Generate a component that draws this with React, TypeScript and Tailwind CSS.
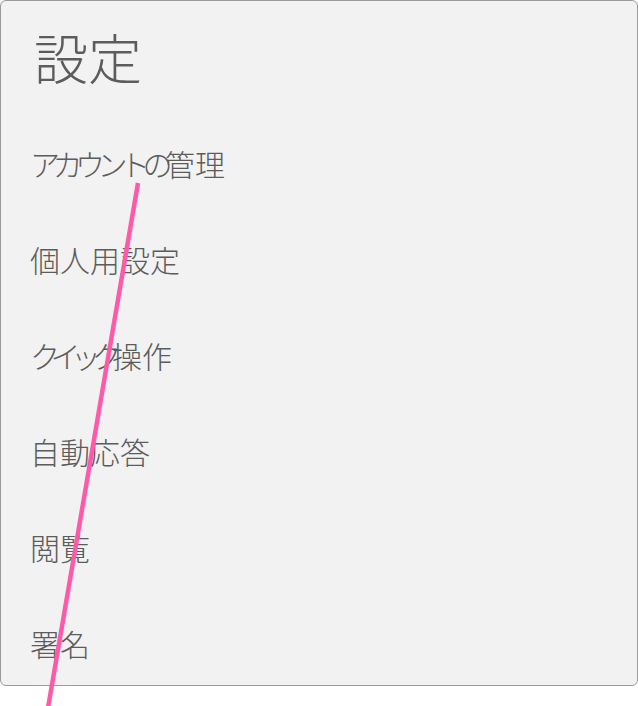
import React from 'react';

// kana runs are set tighter, kanji at full width
const items: { text: string; tight?: string }[][] = [
    [{ text: 'アカウントの', tight: 'tracking-[-7.5px]' }, { text: '管理' }],
    [{ text: '個人用設定' }],
    [{ text: 'クイック', tight: 'tracking-[-9.5px]' }, { text: '操作' }],
    [{ text: '自動応答' }],
    [{ text: '閲覧' }],
    [{ text: '署名' }],
];

export default function App() {
    return (
        <div className="relative w-[638px] h-[706px] bg-white font-['Noto_Sans_CJK_JP',sans-serif]">
            <div className="h-[686px] w-[638px] bg-[#f2f2f2] border border-[#9a9a9a] rounded-[6px] text-[#5c5c5c]">
                <h1 className="pl-[33px] pt-[20px] h-[80px] text-[54px] font-light leading-[72px]">設定</h1>
                <ul className="pt-[62px]">
                    {items.map((parts, i) => (
                        <li key={i} className="pl-[29px] h-[96px] text-[30px] font-light leading-[40px]">
                            {parts.map((p) => (
                                <span key={p.text} className={p.tight ?? ''}>
                                    {p.text}
                                </span>
                            ))}
                        </li>
                    ))}
                </ul>
            </div>
            {/* annotation stroke over the panel */}
            <svg className="absolute left-0 top-0 pointer-events-none" width="638" height="706">
                <line x1="138" y1="183" x2="48" y2="708" stroke="#ff5aa8" strokeWidth="4.5" />
            </svg>
        </div>
    );
}
